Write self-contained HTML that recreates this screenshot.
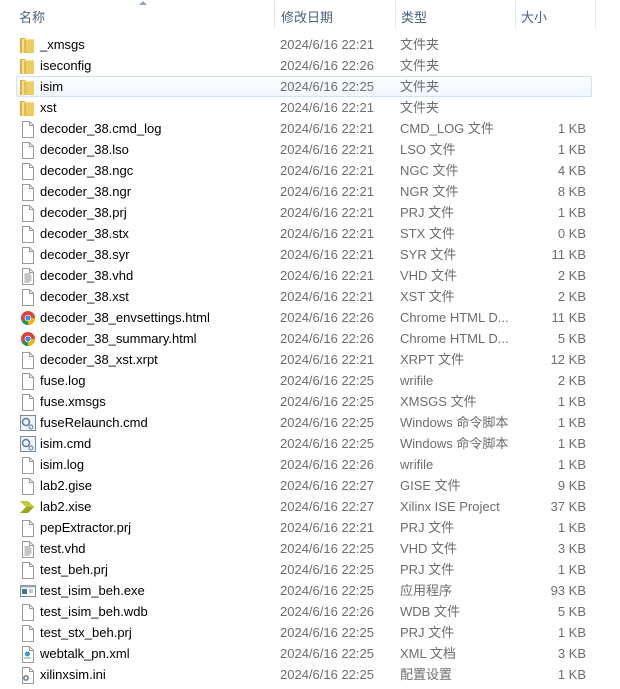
<!DOCTYPE html><html><head><meta charset="utf-8"><style>
body{margin:0;width:620px;height:689px;background:#fff;overflow:hidden;font-family:"Liberation Sans","Noto Sans CJK SC",sans-serif;font-size:13px;position:relative}
.hd{position:absolute;top:0;left:0;width:620px;height:28px;background:#fff}
.hd span{position:absolute;top:7px;color:#4c607a}
.sep{position:absolute;top:0;width:1px;height:28px;background:#e3e8ef}
.r{position:absolute;left:0;width:620px;height:21px;line-height:21px;white-space:nowrap}
.r .n{position:absolute;left:40px;color:#000}
.r .d{position:absolute;left:280px;color:#6d6d6d}
.r .t{position:absolute;left:400px;color:#6d6d6d}
.r .s{position:absolute;right:34px;color:#6d6d6d}
.r svg{position:absolute;left:19px;top:2px}
.sel{position:absolute;left:16px;top:76px;width:574px;height:19px;border:1px solid #d0e2f3;border-radius:2px;background:linear-gradient(#fbfdff,#f2f7fd)}
</style></head><body>
<svg width="0" height="0" style="position:absolute"><defs>
<g id="fo"><path d="M1 2h5l1 1v14H1z" fill="#d9b24a"/><path d="M3 3h12v14H3z" fill="#f6de8c"/><path d="M6 4h9v13H6z" fill="#eccd62"/><path d="M6 4v13" stroke="#c9a23a"/></g>
<g id="doc"><path d="M3.5 1.5h7l4 4v12h-11z" fill="#fff" stroke="#9a9a9a"/><path d="M10.5 1.5v4h4" fill="none" stroke="#9a9a9a"/></g>
<g id="vhd"><use href="#doc"/><path d="M5.5 7h6M5.5 9h7M5.5 11h7M5.5 13h7M5.5 15h5" stroke="#888"/></g>
<g id="ch"><circle cx="9" cy="9" r="7" fill="#db4437"/><path d="M9 9L2.9 12.5A7 7 0 0 0 9 16z" fill="#0f9d58"/><path d="M9 9L15.1 12.5 A7 7 0 0 1 9 16z" fill="#f4b400"/><path d="M9 9L16 9A7 7 0 0 1 15.1 12.5z" fill="#f4b400"/><circle cx="9" cy="9" r="3.3" fill="#fff"/><circle cx="9" cy="9" r="2.6" fill="#4285f4"/></g>
<g id="cmd"><rect x="1.5" y="1.5" width="15" height="15" fill="#eef3f8" stroke="#7a8a9a"/><circle cx="7" cy="8" r="3.5" fill="none" stroke="#5a7a9a" stroke-width="1.5"/><circle cx="12" cy="13" r="2" fill="none" stroke="#5a7a9a"/></g>
<g id="xi"><path d="M1 3h8l6 6-6 6H1l6-6z" fill="#9aa51c"/><path d="M1 3h8l6 6H7z" fill="#c2ca3a"/></g>
<g id="exe"><rect x="1.5" y="3.5" width="15" height="11" fill="#fff" stroke="#7a8a9a"/><rect x="1.5" y="3.5" width="15" height="2" fill="#9ab"/><rect x="3" y="7" width="5" height="5" fill="#3a7a8a"/><path d="M10 8h4M10 10h4" stroke="#889"/></g>
<g id="xml"><use href="#doc"/><circle cx="8.5" cy="9" r="2.5" fill="#3a9ad0"/><path d="M5 13h7" stroke="#6a9"/></g>
<g id="ini"><use href="#doc"/><circle cx="7" cy="12" r="3" fill="#7a8a9a"/><circle cx="7" cy="12" r="1.2" fill="#fff"/></g>
</defs></svg>
<div class="hd">
<div style="position:absolute;left:139px;top:1px;width:0;height:0;border-left:4px solid transparent;border-right:4px solid transparent;border-bottom:4px solid #8fa3bb"></div>
<span style="left:19px">名称</span><span style="left:281px">修改日期</span><span style="left:401px">类型</span><span style="left:521px">大小</span>
<div class="sep" style="left:274px"></div><div class="sep" style="left:395px"></div><div class="sep" style="left:515px"></div><div class="sep" style="left:595px"></div>
</div>
<div class="sel"></div>
<div class="r" style="top:34px"><svg width="18" height="18"><use href="#fo"/></svg><span class="n">_xmsgs</span><span class="d">2024/6/16 22:21</span><span class="t">文件夹</span></div>
<div class="r" style="top:55px"><svg width="18" height="18"><use href="#fo"/></svg><span class="n">iseconfig</span><span class="d">2024/6/16 22:26</span><span class="t">文件夹</span></div>
<div class="r" style="top:76px"><svg width="18" height="18"><use href="#fo"/></svg><span class="n">isim</span><span class="d">2024/6/16 22:25</span><span class="t">文件夹</span></div>
<div class="r" style="top:97px"><svg width="18" height="18"><use href="#fo"/></svg><span class="n">xst</span><span class="d">2024/6/16 22:21</span><span class="t">文件夹</span></div>
<div class="r" style="top:118px"><svg width="18" height="18"><use href="#doc"/></svg><span class="n">decoder_38.cmd_log</span><span class="d">2024/6/16 22:21</span><span class="t">CMD_LOG 文件</span><span class="s">1 KB</span></div>
<div class="r" style="top:139px"><svg width="18" height="18"><use href="#doc"/></svg><span class="n">decoder_38.lso</span><span class="d">2024/6/16 22:21</span><span class="t">LSO 文件</span><span class="s">1 KB</span></div>
<div class="r" style="top:160px"><svg width="18" height="18"><use href="#doc"/></svg><span class="n">decoder_38.ngc</span><span class="d">2024/6/16 22:21</span><span class="t">NGC 文件</span><span class="s">4 KB</span></div>
<div class="r" style="top:181px"><svg width="18" height="18"><use href="#doc"/></svg><span class="n">decoder_38.ngr</span><span class="d">2024/6/16 22:21</span><span class="t">NGR 文件</span><span class="s">8 KB</span></div>
<div class="r" style="top:202px"><svg width="18" height="18"><use href="#doc"/></svg><span class="n">decoder_38.prj</span><span class="d">2024/6/16 22:21</span><span class="t">PRJ 文件</span><span class="s">1 KB</span></div>
<div class="r" style="top:223px"><svg width="18" height="18"><use href="#doc"/></svg><span class="n">decoder_38.stx</span><span class="d">2024/6/16 22:21</span><span class="t">STX 文件</span><span class="s">0 KB</span></div>
<div class="r" style="top:244px"><svg width="18" height="18"><use href="#doc"/></svg><span class="n">decoder_38.syr</span><span class="d">2024/6/16 22:21</span><span class="t">SYR 文件</span><span class="s">11 KB</span></div>
<div class="r" style="top:265px"><svg width="18" height="18"><use href="#vhd"/></svg><span class="n">decoder_38.vhd</span><span class="d">2024/6/16 22:21</span><span class="t">VHD 文件</span><span class="s">2 KB</span></div>
<div class="r" style="top:286px"><svg width="18" height="18"><use href="#doc"/></svg><span class="n">decoder_38.xst</span><span class="d">2024/6/16 22:21</span><span class="t">XST 文件</span><span class="s">2 KB</span></div>
<div class="r" style="top:307px"><svg width="18" height="18"><use href="#ch"/></svg><span class="n">decoder_38_envsettings.html</span><span class="d">2024/6/16 22:26</span><span class="t">Chrome HTML D...</span><span class="s">11 KB</span></div>
<div class="r" style="top:328px"><svg width="18" height="18"><use href="#ch"/></svg><span class="n">decoder_38_summary.html</span><span class="d">2024/6/16 22:26</span><span class="t">Chrome HTML D...</span><span class="s">5 KB</span></div>
<div class="r" style="top:349px"><svg width="18" height="18"><use href="#doc"/></svg><span class="n">decoder_38_xst.xrpt</span><span class="d">2024/6/16 22:21</span><span class="t">XRPT 文件</span><span class="s">12 KB</span></div>
<div class="r" style="top:370px"><svg width="18" height="18"><use href="#doc"/></svg><span class="n">fuse.log</span><span class="d">2024/6/16 22:25</span><span class="t">wrifile</span><span class="s">2 KB</span></div>
<div class="r" style="top:391px"><svg width="18" height="18"><use href="#doc"/></svg><span class="n">fuse.xmsgs</span><span class="d">2024/6/16 22:25</span><span class="t">XMSGS 文件</span><span class="s">1 KB</span></div>
<div class="r" style="top:412px"><svg width="18" height="18"><use href="#cmd"/></svg><span class="n">fuseRelaunch.cmd</span><span class="d">2024/6/16 22:25</span><span class="t">Windows 命令脚本</span><span class="s">1 KB</span></div>
<div class="r" style="top:433px"><svg width="18" height="18"><use href="#cmd"/></svg><span class="n">isim.cmd</span><span class="d">2024/6/16 22:25</span><span class="t">Windows 命令脚本</span><span class="s">1 KB</span></div>
<div class="r" style="top:454px"><svg width="18" height="18"><use href="#doc"/></svg><span class="n">isim.log</span><span class="d">2024/6/16 22:26</span><span class="t">wrifile</span><span class="s">1 KB</span></div>
<div class="r" style="top:475px"><svg width="18" height="18"><use href="#doc"/></svg><span class="n">lab2.gise</span><span class="d">2024/6/16 22:27</span><span class="t">GISE 文件</span><span class="s">9 KB</span></div>
<div class="r" style="top:496px"><svg width="18" height="18"><use href="#xi"/></svg><span class="n">lab2.xise</span><span class="d">2024/6/16 22:27</span><span class="t">Xilinx ISE Project</span><span class="s">37 KB</span></div>
<div class="r" style="top:517px"><svg width="18" height="18"><use href="#doc"/></svg><span class="n">pepExtractor.prj</span><span class="d">2024/6/16 22:21</span><span class="t">PRJ 文件</span><span class="s">1 KB</span></div>
<div class="r" style="top:538px"><svg width="18" height="18"><use href="#vhd"/></svg><span class="n">test.vhd</span><span class="d">2024/6/16 22:25</span><span class="t">VHD 文件</span><span class="s">3 KB</span></div>
<div class="r" style="top:559px"><svg width="18" height="18"><use href="#doc"/></svg><span class="n">test_beh.prj</span><span class="d">2024/6/16 22:25</span><span class="t">PRJ 文件</span><span class="s">1 KB</span></div>
<div class="r" style="top:580px"><svg width="18" height="18"><use href="#exe"/></svg><span class="n">test_isim_beh.exe</span><span class="d">2024/6/16 22:25</span><span class="t">应用程序</span><span class="s">93 KB</span></div>
<div class="r" style="top:601px"><svg width="18" height="18"><use href="#doc"/></svg><span class="n">test_isim_beh.wdb</span><span class="d">2024/6/16 22:26</span><span class="t">WDB 文件</span><span class="s">5 KB</span></div>
<div class="r" style="top:622px"><svg width="18" height="18"><use href="#doc"/></svg><span class="n">test_stx_beh.prj</span><span class="d">2024/6/16 22:25</span><span class="t">PRJ 文件</span><span class="s">1 KB</span></div>
<div class="r" style="top:643px"><svg width="18" height="18"><use href="#xml"/></svg><span class="n">webtalk_pn.xml</span><span class="d">2024/6/16 22:25</span><span class="t">XML 文档</span><span class="s">3 KB</span></div>
<div class="r" style="top:664px"><svg width="18" height="18"><use href="#ini"/></svg><span class="n">xilinxsim.ini</span><span class="d">2024/6/16 22:25</span><span class="t">配置设置</span><span class="s">1 KB</span></div>
</body></html>
